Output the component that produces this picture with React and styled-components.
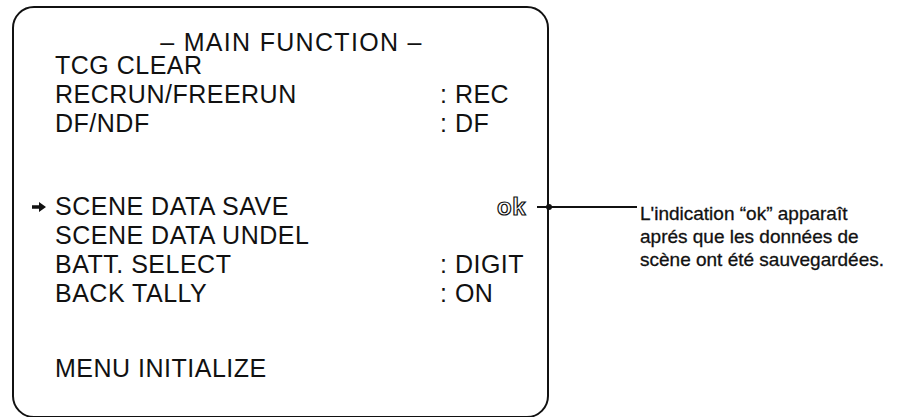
import React from "react";
import styled, { createGlobalStyle } from "styled-components";

const Global = createGlobalStyle`
  html, body { margin: 0; padding: 0; background: #fff; }
  body { font-family: "Liberation Sans", Arial, sans-serif; color: #111; }
`;

const Page = styled.div`
  width: 899px;
  height: 417px;
  display: flex;
  align-items: flex-start;
  padding: 6px 0 0 12px;
  box-sizing: border-box;
  overflow: hidden;
`;

const Screen = styled.div`
  position: relative;
  width: 537px;
  height: 412px;
  box-sizing: border-box;
  border: 2px solid #111;
  border-radius: 22px;
  padding: 20px 0 0 18px;
  display: flex;
  flex-direction: column;
  font-size: 25px;
  line-height: 29px;
`;

const Title = styled.div`
  text-align: center;
  padding-left: 4px;
  margin-bottom: -6px;
  letter-spacing: 1.3px;
`;

const Row = styled.div`
  display: grid;
  grid-template-columns: 23px 385px 57px auto;
  align-items: center;
  margin-top: ${(p) => p.$gap || 0}px;
  letter-spacing: 0.5px;
`;

const ArrowCell = styled.span`
  display: flex;
  align-items: center;
`;

const Value = styled.span`
  white-space: nowrap;
`;

const OkMark = styled.span`
  position: relative;
  font-weight: bold;
  font-size: 24px;
  color: #fff;
  -webkit-text-stroke: 1.2px #111;
  letter-spacing: 0.5px;
`;

const Leader = styled.span`
  position: absolute;
  left: 40px;
  top: 50%;
  width: 100px;
  height: 2px;
  margin-top: -1px;
  background: #111;
  &::before {
    content: "";
    position: absolute;
    left: 9px;
    top: -2px;
    width: 6px;
    height: 6px;
    border-radius: 50%;
    background: #111;
  }
`;

const Note = styled.div`
  margin: 196px 0 0 91px;
  font-size: 19px;
  line-height: 23px;
  color: #111;
  white-space: nowrap;
  -webkit-text-stroke: 0.3px #111;
`;

const Arrow = () => (
  <svg width="14" height="10" viewBox="0 0 14 10">
    <path d="M0 3.2h7V0l7 5-7 5V6.8H0z" fill="#111" />
  </svg>
);

const rows = [
  { label: "TCG CLEAR" },
  { label: "RECRUN/FREERUN", value: ": REC" },
  { label: "DF/NDF", value: ": DF" },
  { label: "SCENE DATA SAVE", arrow: true, ok: true, gap: 54 },
  { label: "SCENE DATA UNDEL" },
  { label: "BATT. SELECT", value: ": DIGIT" },
  { label: "BACK TALLY", value: ": ON" },
  { label: "MENU INITIALIZE", gap: 46 },
];

export default function App() {
  return (
    <>
      <Global />
      <Page>
        <Screen>
          <Title>– MAIN FUNCTION –</Title>
          {rows.map((r) => (
            <Row key={r.label} $gap={r.gap}>
              <ArrowCell>{r.arrow && <Arrow />}</ArrowCell>
              <span>{r.label}</span>
              <Value>{r.value}</Value>
              <span>
                {r.ok && (
                  <OkMark>
                    ok
                    <Leader />
                  </OkMark>
                )}
              </span>
            </Row>
          ))}
        </Screen>
        <Note>
          L'indication “ok” apparaît
          <br />
          aprés que les données de
          <br />
          scène ont été sauvegardées.
        </Note>
      </Page>
    </>
  );
}
